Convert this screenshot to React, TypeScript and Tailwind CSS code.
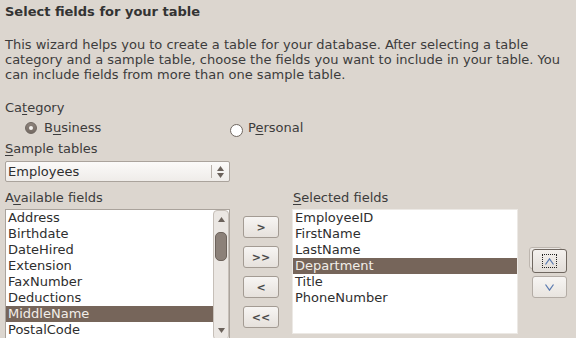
import React from "react";

const available = [
  "Address",
  "Birthdate",
  "DateHired",
  "Extension",
  "FaxNumber",
  "Deductions",
  "MiddleName",
  "PostalCode",
];

const selected = ["EmployeeID", "FirstName", "LastName", "Department", "Title", "PhoneNumber"];

function Mn({ pre, u, post }: { pre?: string; u: string; post?: string }) {
  return (
    <span>
      {pre}
      <span className="underline underline-offset-2">{u}</span>
      {post}
    </span>
  );
}

function Row({ label, active }: { label: string; active?: boolean }) {
  return (
    <div
      className={`h-[16px] leading-[16px] pl-[2px] whitespace-nowrap ${
        active ? "bg-[#76655a] text-[#f2eee9]" : "text-[#2e2e2e]"
      }`}
    >
      {label}
    </div>
  );
}

function MoveButton({ label }: { label: string }) {
  return (
    <button className="w-[36px] h-[22px] rounded-[3px] border border-[#a39b93] bg-gradient-to-b from-[#f7f5f3] to-[#e6e1dc] text-[11px] font-bold text-[#4a4a4a] leading-none">
      {label}
    </button>
  );
}

export default function App() {
  return (
    <div
      className="w-[576px] h-[338px] overflow-hidden bg-[#dcd6cf] text-[#3c3c3c] text-[13px] leading-[15px]"
      style={{ fontFamily: '"DejaVu Sans", sans-serif' }}
    >
      <div className="pl-[5px] pt-[4px]">
        <div className="font-bold leading-[15px] text-[#333]">Select fields for your table</div>
        <p className="mt-[18px] w-[562px]">
          This wizard helps you to create a table for your database. After selecting a table category and a sample
          table, choose the fields you want to include in your table. You can include fields from more than one
          sample table.
        </p>
        <div className="mt-[18px]">
          <Mn pre="Ca" u="t" post="egory" />
        </div>
        <div className="mt-[5px] flex items-center h-[15px]">
          <div className="ml-[20px] w-[12px] h-[12px] rounded-full border border-[#6e6660] bg-gradient-to-b from-[#8e847c] to-[#746a63] flex items-center justify-center">
            <div className="w-[4px] h-[4px] rounded-full bg-[#f4f1ee]" />
          </div>
          <span className="ml-[7px] w-[186px]">
            <Mn pre="B" u="u" post="siness" />
          </span>
          <div className="mt-[5px] w-[13px] h-[13px] rounded-full border border-[#6f6760] bg-white" />
          <span className="ml-[5px]">
            <Mn pre="P" u="e" post="rsonal" />
          </span>
        </div>
        <div className="mt-[6px]">
          <Mn u="S" post="ample tables" />
        </div>
        <div className="mt-[5px] w-[225px] h-[21px] rounded-[2px] border border-[#aaa39c] bg-gradient-to-b from-[#fbfaf9] to-[#efece9] flex items-center">
          <span className="flex-1 pl-[2px] text-[#2e2e2e]">Employees</span>
          <div className="w-px h-[13px] bg-[#b7b0a9]" />
          <div className="w-[17px] flex flex-col items-center justify-center gap-[2px]">
            <svg width="7" height="5" viewBox="0 0 7 5">
              <path d="M3.5 0 L7 5 L0 5 Z" fill="#6b625b" />
            </svg>
            <svg width="7" height="5" viewBox="0 0 7 5">
              <path d="M0 0 L7 0 L3.5 5 Z" fill="#6b625b" />
            </svg>
          </div>
        </div>
        <div className="mt-[8px] flex">
          <div className="w-[288px]">
            <Mn pre="A" u="v" post="ailable fields" />
          </div>
          <div>
            <Mn u="S" post="elected fields" />
          </div>
        </div>
        <div className="mt-[4px] flex items-start">
          <div className="w-[225px] h-[132px] border border-[#aaa39c] bg-white flex">
            <div className="flex-1 pt-0">
              {available.map((f) => (
                <Row key={f} label={f} active={f === "MiddleName"} />
              ))}
            </div>
            <div className="w-[16px] h-[130px] rounded-[4px] border border-[#c6bfb8] bg-[#ebe7e3] flex flex-col items-center">
              <svg width="7" height="5" viewBox="0 0 7 5" className="mt-[6px]">
                <path d="M3.5 0 L7 5 L0 5 Z" fill="#6b625b" />
              </svg>
              <div className="mt-[10px] w-[12px] h-[29px] rounded-[5px] border border-[#6d635c] bg-[#8c8179]" />
              <div className="flex-1" />
              <svg width="7" height="5" viewBox="0 0 7 5" className="mb-[6px]">
                <path d="M0 0 L7 0 L3.5 5 Z" fill="#6b625b" />
              </svg>
            </div>
          </div>
          <div className="ml-[13px] mt-[7px] flex flex-col gap-[8px]">
            <MoveButton label=">" />
            <MoveButton label=">>" />
            <MoveButton label="<" />
            <MoveButton label="<<" />
          </div>
          <div className="ml-[13px] w-[226px] h-[125px] bg-white border border-[#ece9e5]">
            {selected.map((f) => (
              <Row key={f} label={f} active={f === "Department"} />
            ))}
          </div>
          <div className="ml-[14px] mt-[40px] flex flex-col gap-[3px]">
            <div className="relative w-[35px] h-[24px]">
              <div className="absolute left-[-3px] top-[-2px] w-[33px] h-[22px] rounded-[3px] border border-[#bdb6af] bg-[#ebe7e3]" />
              <button className="absolute inset-0 rounded-[3px] border border-[#6f6760] bg-gradient-to-b from-[#f4f1ee] to-[#e2ddd8] flex items-center justify-center">
                <span className="border border-dotted border-[#222] px-[2px] h-[14px] flex items-center">
                  <svg width="9" height="7" viewBox="0 0 9 7">
                    <path d="M0.5 6.5 L4.5 0.8 L8.5 6.5" fill="none" stroke="#5a7ab0" strokeWidth="1.2" />
                  </svg>
                </span>
              </button>
            </div>
            <button className="w-[35px] h-[22px] rounded-[3px] border border-[#b3aca5] bg-gradient-to-b from-[#f7f5f3] to-[#e8e4df] flex items-center justify-center">
              <svg width="9" height="7" viewBox="0 0 9 7">
                <path d="M0.5 0.5 L4.5 6.2 L8.5 0.5" fill="none" stroke="#5a7ab0" strokeWidth="1.2" />
              </svg>
            </button>
          </div>
        </div>
      </div>
    </div>
  );
}
